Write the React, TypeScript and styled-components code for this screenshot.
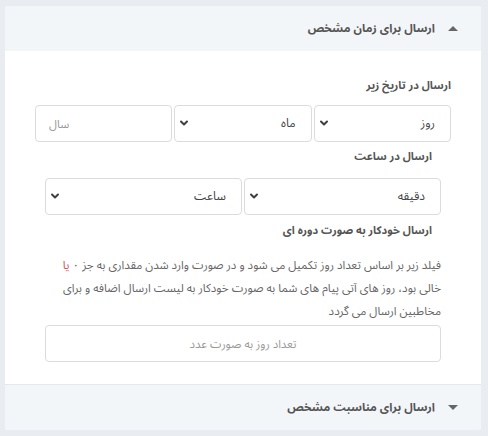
import React from "react";
import styled, { createGlobalStyle } from "styled-components";
import { ChevronDown } from "lucide-react";

const GlobalStyle = createGlobalStyle`
  body {
    margin: 0;
    background: #e9edf1;
    font-family: "Noto Sans Arabic", "DejaVu Sans", sans-serif;
  }
`;

const Page = styled.div`
  direction: rtl;
  width: 476px;
  padding: 6px 7px 0 5px;
`;

const Card = styled.div`
  background: #fff;
  border-radius: 3px;
  overflow: hidden;
`;

const Header = styled.div<{ $divider?: boolean }>`
  height: 45px;
  display: flex;
  align-items: center;
  gap: 13px;
  padding-right: 23px;
  background: #f3f6f9;
  border-top: ${({ $divider }) => ($divider ? "1px solid #e4e8ec" : "none")};
  color: #555;
  font-size: 11.6px;
  font-weight: bold;
`;

const Caret = styled.span<{ $open?: boolean }>`
  width: 0;
  height: 0;
  border-left: 5px solid transparent;
  border-right: 5px solid transparent;
  ${({ $open }) =>
    $open ? "border-bottom: 5px solid #666;" : "border-top: 5px solid #666;"}
`;

const Body = styled.div`
  padding: 25px 0 22px;
`;

const Section = styled.div<{ $inset: number }>`
  padding: 0 ${({ $inset }) => $inset}px;
`;

const Label = styled.div<{ $indent?: number; $top: number; $bottom: number }>`
  color: #555;
  font-size: 11px;
  font-weight: bold;
  line-height: 20px;
  padding-right: ${({ $indent }) => $indent ?? 0}px;
  margin: ${({ $top }) => $top}px 0 ${({ $bottom }) => $bottom}px;
`;

const Row = styled.div`
  display: flex;
  gap: 2px;
`;

const Field = styled.div`
  position: relative;
  flex: 1;
  min-width: 0;
`;

const Select = styled.select`
  width: 100%;
  height: 37px;
  appearance: none;
  border: 1px solid #dcdcdc;
  border-radius: 4px;
  background: #fff;
  padding: 0 15px 0 30px;
  font-family: inherit;
  font-size: 12px;
  color: #444;
  direction: rtl;
  outline: none;
`;

const Chevron = styled(ChevronDown)`
  position: absolute;
  left: 4px;
  top: 12px;
  color: #3f3f3f;
  pointer-events: none;
`;

const Input = styled.input<{ $align: "left" | "center" }>`
  display: block;
  width: 100%;
  height: 37px;
  box-sizing: border-box;
  border: 1px solid #dcdcdc;
  border-radius: 4px;
  padding: 0 13px;
  font-family: inherit;
  font-size: 11.5px;
  text-align: ${({ $align }) => $align};
  outline: none;
  &::placeholder {
    color: #999;
  }
`;

const Help = styled.p`
  margin: 13px 0 2px;
  color: #666;
  font-size: 11.6px;
  line-height: 23px;
`;

const Accent = styled.span`
  color: #d9534f;
`;

const Dropdown = ({ value }: { value: string }) => (
  <Field>
    <Select defaultValue={value}>
      <option>{value}</option>
    </Select>
    <Chevron size={12} strokeWidth={4} />
  </Field>
);

export default function App() {
  return (
    <>
      <GlobalStyle />
      <Page>
        <Card>
          <Header>
            <Caret $open />
            <span>ارسال برای زمان مشخص</span>
          </Header>
          <Body>
            <Section $inset={30}>
              <Label $top={0} $bottom={9}>ارسال در تاریخ زیر</Label>
              <Row>
                <Dropdown value="روز" />
                <Dropdown value="ماه" />
                <Field>
                  <Input $align="left" placeholder="سال" />
                </Field>
              </Row>
            </Section>
            <Section $inset={40}>
              <Label $indent={9} $top={5} $bottom={11}>ارسال در ساعت</Label>
              <Row>
                <Dropdown value="دقیقه" />
                <Dropdown value="ساعت" />
              </Row>
              <Label $indent={9} $top={6} $bottom={0}>ارسال خودکار به صورت دوره ای</Label>
              <Help>
                فیلد زیر بر اساس تعداد روز تکمیل می شود و در صورت وارد شدن مقداری به جز ۰ <Accent>یا</Accent>{" "}
                خالی بود، روز های آتی پیام های شما به صورت خودکار به لیست ارسال اضافه و برای مخاطبین ارسال می گردد
              </Help>
              <Input $align="center" placeholder="تعداد روز به صورت عدد" />
            </Section>
          </Body>
          <Header $divider>
            <Caret />
            <span>ارسال برای مناسبت مشخص</span>
          </Header>
        </Card>
      </Page>
    </>
  );
}
